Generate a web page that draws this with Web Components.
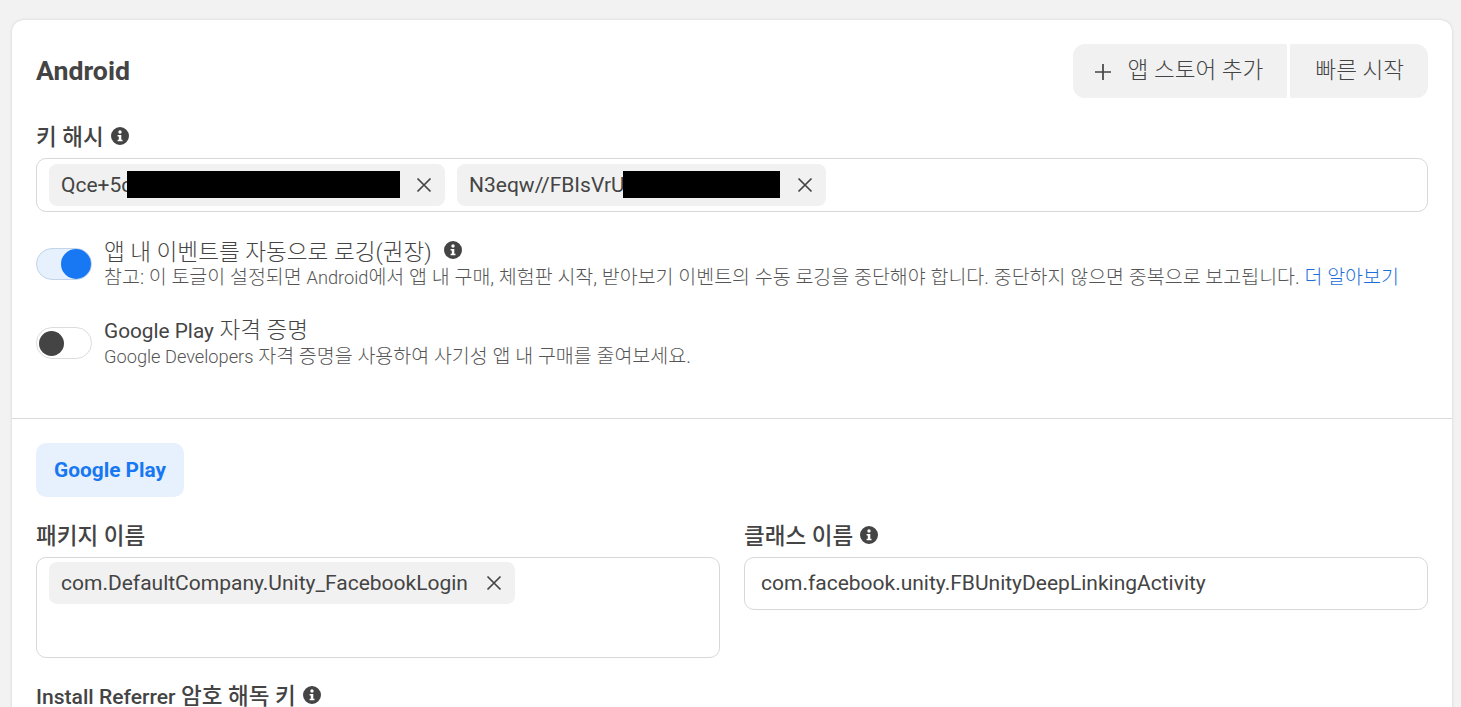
<!DOCTYPE html>
<html lang="ko">
<head>
<meta charset="UTF-8">
<title>Android settings</title>
<style>
    html, body { margin: 0; height: 707px; overflow: hidden; background: #f2f2f2; }
    body {
        font-family: Roboto, "Noto Sans CJK KR", sans-serif;
        color: #444950;
        padding: 20px 9px 0 12px;
        box-sizing: border-box;
    }
    /* latin runs sit a bit smaller than the hangul next to them */
    .l { font-size: .935em; }
</style>
</head>
<body>
<platform-card>
    <platform-header title="Android">
        <action-button plus>앱 스토어 추가</action-button>
        <action-button last>빠른 시작</action-button>
    </platform-header>

    <form-field label="키 해시" info>
        <tag-box>
            <tag-chip redact-left="78" redact-width="273">Qce+5c</tag-chip>
            <tag-chip redact-left="166" redact-width="157" extra="1">N3eqw//FBIsVrU</tag-chip>
        </tag-box>
    </form-field>

    <toggle-row on label="앱 내 이벤트를 자동으로 로깅(권장)" info>
        참고: 이 토글이 설정되면 <span class="l">Android</span>에서 앱 내 구매, 체험판 시작, 받아보기 이벤트의 수동 로깅을 중단해야 합니다. 중단하지 않으면 중복으로 보고됩니다. <a-link>더 알아보기</a-link>
    </toggle-row>
    <toggle-row label="Google Play 자격 증명">
        <span class="l">Google Developers</span> 자격 증명을 사용하여 사기성 앱 내 구매를 줄여보세요.
    </toggle-row>

    <store-section tab="Google Play">
        <form-field label="패키지 이름">
            <tag-box tall>
                <tag-chip>com.DefaultCompany.Unity_FacebookLogin</tag-chip>
            </tag-box>
        </form-field>
        <form-field label="클래스 이름" info>
            <text-box>com.facebook.unity.FBUnityDeepLinkingActivity</text-box>
        </form-field>
        <form-field wide label="Install Referrer 암호 해독 키" info strong></form-field>
    </store-section>
</platform-card>

<script>
    const INFO_ICON = `<svg viewBox="0 0 18 18" width="18" height="18" aria-hidden="true"><path fill="currentColor" fill-rule="evenodd" d="M9 0a9 9 0 1 1 0 18A9 9 0 0 1 9 0Zm0 3.3a1.7 1.7 0 1 0 0 3.4 1.7 1.7 0 0 0 0-3.4ZM6.6 8v1.5h1.2v3.2H6.6v1.6h4.9v-1.6h-1.2V8Z"/></svg>`;
    const X_ICON = `<svg viewBox="0 0 16 16" width="16" height="16" aria-hidden="true"><path fill="none" stroke="currentColor" stroke-width="1.7" d="M1.5 1.5l13 13M14.5 1.5l-13 13"/></svg>`;
    const PLUS_ICON = `<svg viewBox="0 0 16 16" width="16" height="16" aria-hidden="true"><path fill="none" stroke="currentColor" stroke-width="1.7" d="M8 0v16M0 8h16"/></svg>`;

    const latin = text => text.replace(/[A-Za-z][A-Za-z ]*[A-Za-z]/g, m => `<span class="l">${m}</span>`);

    // small helper so each element only has to give its markup
    class Base extends HTMLElement {
        constructor() {
            super();
            this.attachShadow({mode: 'open'});
        }
        connectedCallback() {
            this.shadowRoot.innerHTML = this.render();
        }
    }

    customElements.define('platform-card', class extends Base {
        render() {
            return `<style>
                :host { display: block; background: #fff; border-radius: 12px 12px 0 0; height: 700px;
                        padding: 24px 24px 0; box-sizing: border-box; box-shadow: 0 0 3px rgba(0,0,0,.14); }
            </style><slot></slot>`;
        }
    });

    customElements.define('platform-header', class extends Base {
        render() {
            return `<style>
                :host { display: flex; align-items: center; justify-content: space-between; height: 54px; }
                h2 { margin: 0; font-size: 26.7px; font-weight: 700; color: #444; }
                div { display: flex; gap: 3px; }
            </style><h2>${this.getAttribute('title')}</h2><div><slot></slot></div>`;
        }
    });

    customElements.define('action-button', class extends Base {
        render() {
            const plus = this.hasAttribute('plus');
            return `<style>
                :host { display: flex; align-items: center; justify-content: center; height: 54px; gap: 17px;
                        background: #f1f1f1; font-size: 22.6px; font-weight: 300; color: #444; box-sizing: border-box;
                        padding: 0 24px 0 ${plus ? 22 : 25}px;
                        border-radius: ${plus ? '12px 2px 2px 12px' : '2px 12px 12px 2px'}; }
                svg { display: block; margin-top: 1px; }
                span { margin-bottom: 5px; }
            </style>${plus ? PLUS_ICON : ''}<span><slot></slot></span>`;
        }
    });

    customElements.define('info-icon', class extends Base {
        render() {
            return `<style>
                :host { display: inline-flex; color: #444; }
            </style>${INFO_ICON}`;
        }
    });

    customElements.define('form-field', class extends Base {
        render() {
            const info = this.hasAttribute('info') ? '<info-icon></info-icon>' : '';
            return `<style>
                :host { display: block; margin-top: 23px; }
                :host([wide]) { grid-column: 1 / -1; margin-top: 0; }
                label { display: flex; align-items: center; gap: 7px; height: 30px; margin-bottom: 7px;
                        font-size: 22.5px; font-weight: 500; color: #444; }
                label span:first-child { margin-bottom: 3px; }
                .l { font-size: .937em; }
            </style><label><span>${latin(this.getAttribute('label'))}</span>${info}</label><slot></slot>`;
        }
    });

    customElements.define('tag-box', class extends Base {
        render() {
            return `<style>
                :host { display: flex; align-items: flex-start; gap: 12px; height: 54px; padding: 5px 12px;
                        box-sizing: border-box; background: #fff; border: 1px solid #d8d8d8; border-radius: 10px; }
                :host([tall]) { height: 101px; padding-top: 4px; }
            </style><slot></slot>`;
        }
    });

    customElements.define('tag-chip', class extends Base {
        render() {
            const left = this.getAttribute('redact-left');
            const redact = left ? `<i style="left:${left}px;width:${this.getAttribute('redact-width')}px"></i>` : '';
            const extra = Number(this.getAttribute('extra') || 0);
            const width = left ? (Number(left) + Number(this.getAttribute('redact-width')) - 14 + extra) : 0;
            return `<style>
                :host { display: flex; align-items: center; position: relative; height: 42px; padding: 0 13px 0 12px;
                        gap: 18px; background: #f1f1f1; border-radius: 8px; font-size: 21px; color: #444; }
                span { display: block; white-space: nowrap; ${width ? `width:${width}px;` : ''} }
                i { position: absolute; top: 7px; height: 27px; background: #000; }
                svg { display: block; }
            </style><span><slot></slot></span>${redact}${X_ICON}`;
        }
    });

    customElements.define('text-box', class extends Base {
        render() {
            return `<style>
                :host { display: flex; align-items: center; height: 53px; padding: 0 16px 2px; box-sizing: border-box;
                        border: 1px solid #d8d8d8; border-radius: 10px; background: #fff;
                        font-size: 21px; color: #444; }
            </style><slot></slot>`;
        }
    });

    customElements.define('toggle-row', class extends Base {
        render() {
            const on = this.hasAttribute('on');
            const info = this.hasAttribute('info') ? '<info-icon></info-icon>' : '';
            return `<style>
                :host { display: flex; gap: 12px; margin-top: 24px; height: 55px; }
                .track { flex: none; position: relative; width: 56px; height: 32px; margin-top: 12px;
                         box-sizing: border-box; border-radius: 16px;
                         border: 1px solid ${on ? '#c3d3e8' : '#dcdcdc'}; background: ${on ? '#e7f1fd' : '#fff'}; }
                .knob { position: absolute; top: ${on ? 0 : 2.5}px; ${on ? 'right: 0' : 'left: 2'}px;
                        width: ${on ? 30 : 25}px; height: ${on ? 30 : 25}px; border-radius: 50%;
                        background: ${on ? '#1877f2' : '#444'}; }
                .title { display: flex; align-items: center; gap: 12px; height: 28px; font-size: 22.6px; font-weight: 300; color: #444; white-space: nowrap; }
                .title span:first-child { margin-bottom: ${on ? 0 : 2}px; }
                .title .l { font-size: .92em; font-weight: 400; }
                .desc { font-size: 19.5px; font-weight: 300; line-height: 28px; color: #555; white-space: nowrap; }
            </style>
            <div class="track"><div class="knob"></div></div>
            <div>
                <div class="title"><span>${latin(this.getAttribute('label'))}</span>${info}</div>
                <div class="desc"><slot></slot></div>
            </div>`;
        }
    });

    customElements.define('a-link', class extends Base {
        render() {
            return `<style>:host { color: #1d6fd8; }</style><slot></slot>`;
        }
    });

    customElements.define('store-section', class extends Base {
        render() {
            return `<style>
                :host { display: block; margin: 48px -24px 0; padding: 24px 24px 0; border-top: 1px solid #dadada; }
                .tab { display: inline-flex; align-items: center; height: 54px; padding: 0 18px; border-radius: 10px;
                       background: #e7f1fd; color: #1877f2; font-size: 20.85px; font-weight: 700; }
                .grid { display: grid; grid-template-columns: 1fr 1fr; column-gap: 24px; row-gap: 22px; }
            </style>
            <div class="tab">${this.getAttribute('tab')}</div>
            <div class="grid"><slot></slot></div>`;
        }
    });
</script>
</body>
</html>
